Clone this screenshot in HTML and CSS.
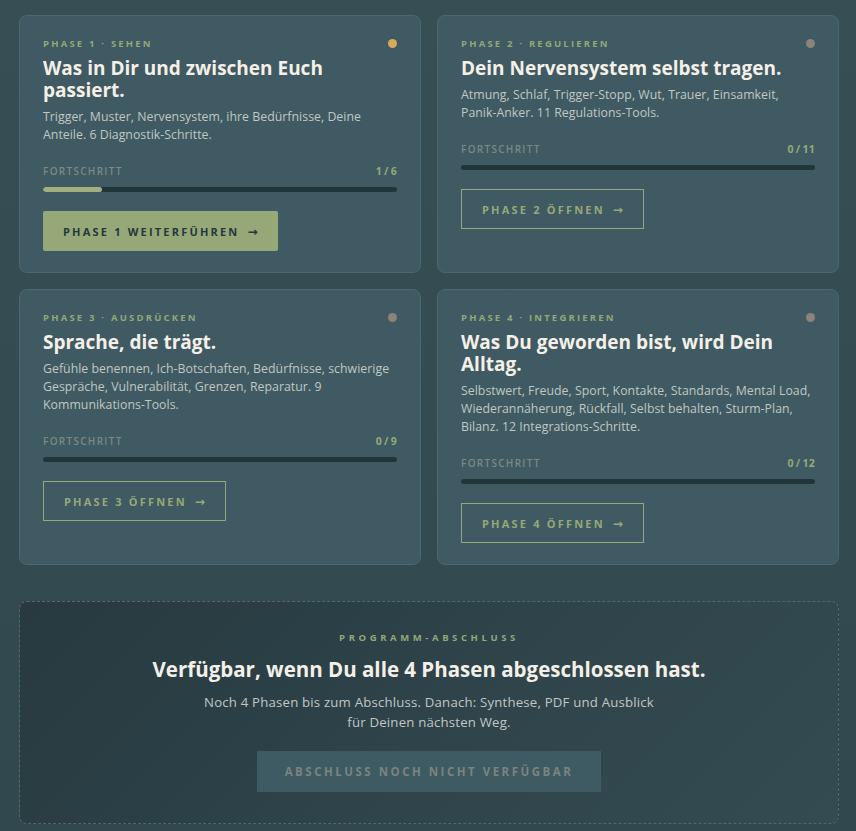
FILE: index.html
```html
<!DOCTYPE html>
<html lang="de">
<head>
<meta charset="utf-8">
<title>Phasen</title>
<link rel="stylesheet" href="styles.css">
</head>
<body>
<main class="wrap">
  <section class="grid">
    <article class="card">
      <div class="card-head">
        <span class="label">Phase 1 · Sehen</span>
        <span class="dot dot-active"></span>
      </div>
      <h2 class="title">Was in Dir und zwischen Euch passiert.</h2>
      <p class="desc">Trigger, Muster, Nervensystem, ihre Bedürfnisse, Deine Anteile. 6 Diagnostik-Schritte.</p>
      <div class="progress-head"><span class="plabel">Fortschritt</span><span class="pcount">1 / 6</span></div>
      <div class="track"><div class="fill" style="width:16.7%"></div></div>
      <div class="actions"><a class="btn btn-solid">Phase 1 weiterführen <span class="arrow">→</span></a></div>
    </article>
    <article class="card">
      <div class="card-head">
        <span class="label">Phase 2 · Regulieren</span>
        <span class="dot"></span>
      </div>
      <h2 class="title">Dein Nervensystem selbst tragen.</h2>
      <p class="desc">Atmung, Schlaf, Trigger-Stopp, Wut, Trauer, Einsamkeit, Panik-Anker. 11 Regulations-Tools.</p>
      <div class="progress-head"><span class="plabel">Fortschritt</span><span class="pcount">0 / 11</span></div>
      <div class="track"></div>
      <div class="actions"><a class="btn btn-outline">Phase 2 öffnen <span class="arrow">→</span></a></div>
    </article>
    <article class="card">
      <div class="card-head">
        <span class="label">Phase 3 · Ausdrücken</span>
        <span class="dot"></span>
      </div>
      <h2 class="title">Sprache, die trägt.</h2>
      <p class="desc">Gefühle benennen, Ich-Botschaften, Bedürfnisse, schwierige Gespräche, Vulnerabilität, Grenzen, Reparatur. 9 Kommunikations-Tools.</p>
      <div class="progress-head"><span class="plabel">Fortschritt</span><span class="pcount">0 / 9</span></div>
      <div class="track"></div>
      <div class="actions"><a class="btn btn-outline">Phase 3 öffnen <span class="arrow">→</span></a></div>
    </article>
    <article class="card">
      <div class="card-head">
        <span class="label">Phase 4 · Integrieren</span>
        <span class="dot"></span>
      </div>
      <h2 class="title">Was Du geworden bist, wird Dein Alltag.</h2>
      <p class="desc">Selbstwert, Freude, Sport, Kontakte, Standards, Mental Load, Wiederannäherung, Rückfall, Selbst behalten, Sturm-Plan, Bilanz. 12 Integrations-Schritte.</p>
      <div class="progress-head"><span class="plabel">Fortschritt</span><span class="pcount">0 / 12</span></div>
      <div class="track"></div>
      <div class="actions"><a class="btn btn-outline">Phase 4 öffnen <span class="arrow">→</span></a></div>
    </article>
  </section>
  <section class="final">
    <div class="final-label">Programm-Abschluss</div>
    <h2 class="final-title">Verfügbar, wenn Du alle 4 Phasen abgeschlossen hast.</h2>
    <p class="final-desc">Noch 4 Phasen bis zum Abschluss. Danach: Synthese, PDF und Ausblick für Deinen nächsten Weg.</p>
    <div class="final-actions"><span class="btn btn-disabled">Abschluss noch nicht verfügbar</span></div>
  </section>
</main>
</body>
</html>
```
FILE: styles.css
```css
* { box-sizing: border-box; }
html, body { margin: 0; padding: 0; }
body {
  background: linear-gradient(180deg, #364e54 0%, #30484e 100%);
  font-family: "Open Sans", "DejaVu Sans", sans-serif;
  color: #f2eee6;
  min-height: 831px;
}
.wrap {
  width: 820px;
  margin-left: 19px;
  padding-top: 15px;
}
.grid {
  display: grid;
  grid-template-columns: 1fr 1fr;
  gap: 16px;
}
.card {
  background: #3f5a62;
  border: 1px solid #4c676e;
  border-radius: 8px;
  padding: 21px 23px 21px;
  display: flex;
  flex-direction: column;
}
.card-head {
  display: flex;
  justify-content: space-between;
  align-items: center;
  height: 12px;
}
.label {
  font-size: 9.5px;
  font-weight: 700;
  letter-spacing: 2.2px;
  text-transform: uppercase;
  color: #93a877;
}
.dot {
  width: 9px;
  height: 9px;
  border-radius: 50%;
  background: #8a8479;
}
.dot-active { background: #d9a85a; }
.title {
  margin: 8px 0 0;
  font-size: 19px;
  line-height: 22px;
  font-weight: 700;
  color: #f4f0e8;
}
.desc {
  margin: 7px 0 0;
  font-size: 12.3px;
  line-height: 18px;
  letter-spacing: 0.03px;
  color: #c1c7c3;
}
.progress-head {
  display: flex;
  justify-content: space-between;
  align-items: center;
  margin-top: 20px;
}
.plabel {
  font-size: 10px;
  font-weight: 600;
  letter-spacing: 1.3px;
  text-transform: uppercase;
  color: #7c8985;
}
.pcount {
  font-size: 10.5px;
  font-weight: 700;
  letter-spacing: 0.3px;
  word-spacing: -1px;
  color: #97a878;
}
.track {
  margin-top: 9px;
  height: 5px;
  border-radius: 3px;
  background: #21363b;
  overflow: hidden;
}
.fill {
  height: 100%;
  background: #a2b07f;
  border-radius: 3px;
}
.actions {
  margin-top: 19px;
  display: flex;
}
.btn {
  display: inline-flex;
  align-items: center;
  justify-content: center;
  height: 40px;
  padding: 0 20px;
  font-size: 11px;
  font-weight: 700;
  letter-spacing: 2.2px;
  text-transform: uppercase;
  text-decoration: none;
}
.arrow { margin-left: 8px; letter-spacing: 0; font-size: 12px; }
.btn-solid {
  background: #97a878;
  color: #22383c;
  border-radius: 2px;
}
.btn-outline {
  border: 1px solid #97a878;
  color: #97a878;
}
.final {
  margin-top: 36px;
  height: 223px;
  border: 1px dashed #52686d;
  border-radius: 8px;
  background: linear-gradient(135deg, #263a3f 0%, #2e434a 50%, #354b52 100%);
  text-align: center;
  padding-top: 29px;
}
.final-label {
  font-size: 9.5px;
  font-weight: 700;
  letter-spacing: 3.6px;
  text-transform: uppercase;
  color: #93a877;
}
.final-title {
  margin: 12px 0 0;
  font-size: 20.5px;
  line-height: 26px;
  font-weight: 700;
  color: #f4f0e8;
}
.final-desc {
  margin: 10px auto 0;
  width: 470px;
  font-size: 13.2px;
  line-height: 20px;
  letter-spacing: 0.2px;
  color: #c1c7c3;
}
.final-actions {
  margin-top: 19px;
  display: flex;
  justify-content: center;
}
.btn-disabled {
  height: 41px;
  width: 344px;
  background: #3e5a62;
  color: #7b847f;
  font-size: 11.5px;
  letter-spacing: 2.5px;
}
```
